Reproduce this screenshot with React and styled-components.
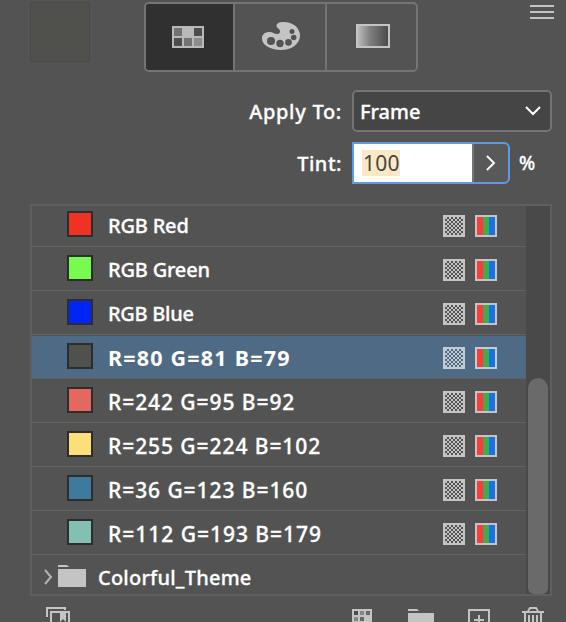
import React from "react";
import styled, { createGlobalStyle, css } from "styled-components";

const Global = createGlobalStyle`
  * { box-sizing: border-box; }
  html, body { margin: 0; background: #535353; }
  body { overflow: hidden; font-family: "Noto Sans", "Open Sans", sans-serif; color: #fff; }
`;

const Panel = styled.main`
  width: 566px;
  height: 622px;
  overflow: hidden;
  background: #535353;
  display: flex;
  flex-direction: column;
  font-size: 20px;
  font-weight: 500;
  -webkit-text-stroke: 0.3px currentColor;
`;

const Header = styled.header`
  display: flex;
  align-items: flex-start;
  height: 90px;
  padding: 2px 12px 0 30px;
`;

const CurrentColor = styled.div`
  width: 60px;
  height: 60px;
  background: #50514d;
  border: 1px solid #4a4a4a;
`;

const ModeTabs = styled.div`
  display: flex;
  width: 274px;
  height: 70px;
  margin-left: 54px;
  border: 2px solid #747474;
  border-radius: 5px;
  overflow: hidden;
`;

const ModeTab = styled.button`
  width: ${(p) => p.$width}px;
  height: 66px;
  padding: ${(p) => p.$pad || "0"};
  display: grid;
  place-items: center;
  border: 0;
  border-right: ${(p) => (p.$last ? "0" : "2px solid #747474")};
  background: ${(p) => (p.$active ? "#303030" : "transparent")};
  svg { display: block; }
`;

const MenuButton = styled.button`
  width: 24px;
  height: 14px;
  margin: 3px 0 0 auto;
  padding: 0;
  border: 0;
  background: none;
  display: flex;
  flex-direction: column;
  justify-content: space-between;
`;

const MenuLine = styled.span`
  height: 2px;
  background: #c4c4c4;
`;

const Field = styled.div`
  display: flex;
  align-items: center;
  height: 42px;
  margin-bottom: ${(p) => p.$gap}px;
`;

const Label = styled.label`
  width: 342px;
  margin-right: 10px;
  text-align: right;
  line-height: 42px;
  padding-top: 1px;
  white-space: nowrap;
  letter-spacing: ${(p) => p.$spacing || 0}px;
`;

const Select = styled.div`
  width: 200px;
  height: 42px;
  padding: 0 9px 0 6px;
  display: flex;
  align-items: center;
  justify-content: space-between;
  border: 2px solid #747474;
  border-radius: 5px;
  background: #454545;
`;

const Stepper = styled.div`
  display: flex;
  width: 158px;
  height: 42px;
  border: 2px solid #5a9cec;
  border-radius: 0 6px 6px 0;
  background: #595959;
`;

const Value = styled.div`
  width: 118px;
  padding: 6px 0 0 8px;
  background: #fff;
`;

const Highlight = styled.span`
  display: block;
  width: 38px;
  height: 26px;
  padding-left: 1px;
  background: #fbe8c5;
  color: #454545;
  font-weight: 400;
  font-size: 21px;
  line-height: 26px;
  letter-spacing: 0.2px;
  -webkit-text-stroke: 0;
`;

const StepButton = styled.div`
  flex: 1;
  display: grid;
  place-items: center;
  border-left: 2px solid #747474;
`;

const Unit = styled.span`
  margin-left: 9px;
  font-size: 19px;
`;

const List = styled.section`
  display: flex;
  width: 522px;
  height: 392px;
  margin-left: 30px;
  border: 2px solid #5f5f5f;
  overflow: hidden;
`;

const Rows = styled.div`
  width: 494px;
  margin-top: -3px;
`;

const Row = styled.div`
  display: flex;
  align-items: flex-start;
  height: 44px;
  padding: 8px 29px 0 35px;
  border-bottom: 1px solid #616161;
  ${(p) => p.$selected && css`
    background: #4f6a84;
    box-shadow: inset 0 1px #535353;
    font-weight: 700;
    -webkit-text-stroke: 0;
  `}
`;

const GroupRow = styled(Row)`
  padding: 10px 0 0 12px;
  border-bottom: 0;
`;

const Chip = styled.span`
  width: 26px;
  height: 26px;
  border: 2px solid #2d2d2d;
  background: ${(p) => p.$color};
`;

const Name = styled.span`
  margin: ${(p) => p.$top}px 0 0 ${(p) => p.$left}px;
  font-size: ${(p) => p.$size || 20}px;
  line-height: 28px;
  white-space: nowrap;
  letter-spacing: ${(p) => p.$spacing || 0}px;
`;

const Badges = styled.span`
  display: flex;
  gap: 10px;
  margin: 4px 0 0 auto;
  svg { display: block; }
`;

const Track = styled.div`
  width: 24px;
  padding: 172px 2px 0;
  background: #494949;
`;

const Thumb = styled.div`
  height: 216px;
  border-radius: 10px 10px 6px 6px;
  background: #6a6a6a;
`;

const Footer = styled.footer`
  display: flex;
  align-items: flex-start;
  height: 26px;
  padding: 11px 0 0 46px;
  overflow: hidden;
  svg { display: block; flex: none; }
`;

const FooterSlot = styled.span`
  margin: ${(p) => p.$top}px 0 0 ${(p) => p.$left}px;
`;

function GridIcon() {
  return (
    <svg width="32" height="22" shapeRendering="crispEdges">
      <path fill="#b9b9b9" d="M0 0h32v22H0z" />
      <path fill="#727272" d="M2 2h8v8H2zM12 12h8v8h-8z" />
      <path fill="#4d4d4d" d="M22 2h8v8h-8zM2 12h8v8H2z" />
      <path fill="#8d8d8d" d="M22 12h8v8h-8z" />
    </svg>
  );
}

function PaletteIcon() {
  return (
    <svg width="38" height="28" viewBox="0 0 38 28">
      <path fill="#c4c4c4" d="M14.5 4C14.5 1.5 17 0 21.5 0C31 0 38 5.8 38 13.5C38 22 29.5 28 19 28C8 28 0 23 0 16.3C0 12 3.4 10 7.5 10C11 10 12 12 15.2 12C17.6 12 18.7 10 17.7 8C17 6.3 14.5 6 14.5 4Z" />
      <g fill="#535353">
        <circle cx="9" cy="19" r="4" /><circle cx="18" cy="21.5" r="3.7" />
        <circle cx="26.5" cy="20.4" r="3.3" /><circle cx="31.7" cy="15.5" r="2.8" />
        <circle cx="30" cy="9.5" r="2.5" />
      </g>
    </svg>
  );
}

function GradientIcon() {
  return (
    <svg width="34" height="24">
      <defs><linearGradient id="ramp"><stop stopColor="#c0c0c0" /><stop offset=".4" stopColor="#808080" /><stop offset="1" stopColor="#484848" /></linearGradient></defs>
      <rect x="1" y="1" width="32" height="22" fill="url(#ramp)" stroke="#c4c4c4" strokeWidth="2" />
    </svg>
  );
}

const checker = Array.from({ length: 81 }, (_, i) => i)
  .filter((i) => i % 2)
  .map((i) => `M${2 + (i % 9) * 2} ${2 + Math.floor(i / 9) * 2}h2v2h-2z`)
  .join("");

function TintIcon({ selected }) {
  return (
    <svg width="22" height="22" shapeRendering="crispEdges">
      <path fill={selected ? "#c3cbd3" : "#c4c4c4"} d="M0 0h22v22H0z" />
      <path fill={selected ? "#4f6a84" : "#535353"} d={checker} />
    </svg>
  );
}

function RgbIcon({ selected }) {
  return (
    <svg width="22" height="22" shapeRendering="crispEdges">
      <path fill={selected ? "#c3cbd3" : "#c4c4c4"} d="M0 0h22v22H0z" />
      <path fill="#fb3c3e" d="M2 2h6v18H2z" />
      <path fill="#43ab47" d="M8 2h6v18H8z" />
      <path fill="#1473e6" d="M14 2h6v18h-6z" />
    </svg>
  );
}

function FolderIcon({ width = 28 }) {
  return (
    <svg width={width} height="22" fill="#c4c4c4">
      <path d={`M0 0H9L11 2H0zM0 4H${width}V22H0z`} />
    </svg>
  );
}

const swatches = [
  { name: "RGB Red", color: "#ef3224", spacing: -0.2 },
  { name: "RGB Green", color: "#76fc4c", spacing: -0.2 },
  { name: "RGB Blue", color: "#0026f5", spacing: -0.3 },
  { name: "R=80 G=81 B=79", color: "#50514d", selected: true, size: 21.5, spacing: 1.2 },
  { name: "R=242 G=95 B=92", color: "#e26860", size: 21, spacing: 0.93 },
  { name: "R=255 G=224 B=102", color: "#fcdf78", size: 21, spacing: 0.93 },
  { name: "R=36 G=123 B=160", color: "#3f7a9d", size: 21, spacing: 0.93 },
  { name: "R=112 G=193 B=179", color: "#84bfb3", size: 21, spacing: 0.98 },
];

export default function App() {
  return (
    <Panel>
      <Global />
      <Header>
        <CurrentColor />
        <ModeTabs>
          <ModeTab $width={89} $pad="0 3px 0 0" $active><GridIcon /></ModeTab>
          <ModeTab $width={92} $pad="0 0 2px 2px"><PaletteIcon /></ModeTab>
          <ModeTab $width={89} $pad="0 0 2px 3px" $last><GradientIcon /></ModeTab>
        </ModeTabs>
        <MenuButton aria-label="Panel menu"><MenuLine /><MenuLine /><MenuLine /></MenuButton>
      </Header>
      <Field $gap={10}>
        <Label $spacing={0.7}>Apply To:</Label>
        <Select>
          <span>Frame</span>
          <svg width="16" height="10" fill="none" stroke="#fff" strokeWidth="2"><path d="M1 1l7 7 7-7" /></svg>
        </Select>
      </Field>
      <Field $gap={20}>
        <Label $spacing={0.5}>Tint:</Label>
        <Stepper>
          <Value><Highlight>100</Highlight></Value>
          <StepButton>
            <svg width="10" height="16" fill="none" stroke="#fff" strokeWidth="2"><path d="M1 1l7 7-7 7" /></svg>
          </StepButton>
        </Stepper>
        <Unit>%</Unit>
      </Field>
      <List>
        <Rows>
          {swatches.map((s) => (
            <Row key={s.name} $selected={s.selected}>
              <Chip $color={s.color} />
              <Name $left={15} $top={1} $size={s.size} $spacing={s.spacing}>{s.name}</Name>
              <Badges><TintIcon selected={s.selected} /><RgbIcon selected={s.selected} /></Badges>
            </Row>
          ))}
          <GroupRow>
            <svg width="14" height="24" fill="none" stroke="#b4b4b4" strokeWidth="2"><path d="M1 5l6 7-6 7" /></svg>
            <FolderIcon />
            <Name $left={12} $top={-1} $spacing={0.22}>Colorful_Theme</Name>
          </GroupRow>
        </Rows>
        <Track><Thumb /></Track>
      </List>
      <Footer>
        <FooterSlot $top={0} $left={0}>
          <svg width="24" height="18" fill="none" stroke="#c4c4c4" strokeWidth="2">
            <path d="M1 10V1h18v2M5 15V5h18v13" /><path fill="#c4c4c4" stroke="none" d="M14 4h6v11l-3-3-3 3z" />
          </svg>
        </FooterSlot>
        <FooterSlot $top={2} $left={282}>
          <svg width="20" height="18" shapeRendering="crispEdges">
            <path fill="#c4c4c4" d="M0 0h20v18H0z" /><path fill="#4d4d4d" d="M2 2h4v4H2z" />
            <path fill="#858585" d="M8 2h4v4H8zM2 8h4v4H2z" /><path fill="#666" d="M14 2h4v4h-4zM8 8h4v4H8z" />
          </svg>
        </FooterSlot>
        <FooterSlot $top={2} $left={36}><FolderIcon width={26} /></FooterSlot>
        <FooterSlot $top={2} $left={34}>
          <svg width="22" height="22" fill="none" stroke="#c4c4c4" strokeWidth="2"><path d="M1 1h20v20H1zM6 11h10M11 6v10" /></svg>
        </FooterSlot>
        <FooterSlot $top={0} $left={32}>
          <svg width="22" height="24" fill="none" stroke="#c4c4c4" strokeWidth="2"><path d="M0 5h22M6 4l2-3h6l2 3M3 5v19M19 5v19M7 8v16M11 8v16M15 8v16" /></svg>
        </FooterSlot>
      </Footer>
    </Panel>
  );
}
